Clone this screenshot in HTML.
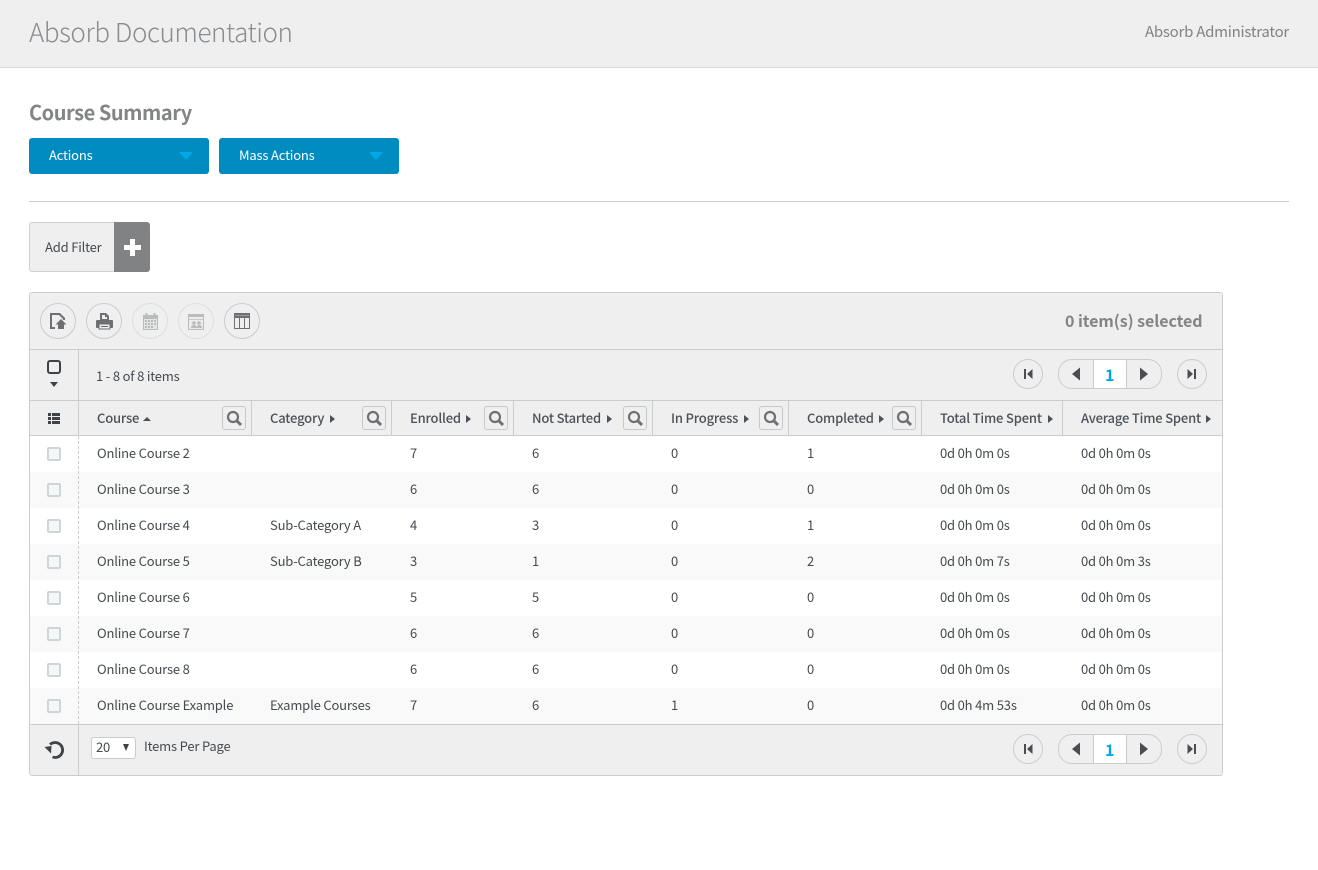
<!DOCTYPE html>
<html><head><meta charset="utf-8"><title>Course Summary</title>
<style>
html,body{margin:0;padding:0;background:#fff;width:1318px;height:870px;overflow:hidden}
body{font-family:"Noto Sans CJK JP","Liberation Sans",sans-serif;font-size:13px;letter-spacing:-.18px;color:#454a50;position:relative}
.a{position:absolute}
.t{position:absolute;white-space:nowrap;line-height:18px;height:18px}
.hl{position:absolute;background:#c9cdcd;height:1px}
.vl{position:absolute;background:#c9cdcd;width:1px}
.btn{position:absolute;top:138px;width:180px;height:36px;background:#008cbf;border-radius:3px;color:#fff;font-size:13px;line-height:33px}
.btn span{position:absolute;left:20px;white-space:nowrap}
.btn i{position:absolute;left:150px;top:14px;width:0;height:0;border-left:7px solid transparent;border-right:7px solid transparent;border-top:8px solid #00a8ea}
.c{position:absolute;width:34px;height:34px;border:1px solid #c9cdcd;border-radius:50%;top:303px}
.c svg{position:absolute;left:0;top:0}
.c.d{border-color:#dcdfdf}
.th{font-weight:500;color:#4c5157}
.s{position:absolute;top:406px;width:22px;height:22px;border:1px solid #c5c9c9;border-radius:3px;background:#efefef}
.s svg{position:absolute;left:2px;top:2px}
.ar{position:absolute;top:415px;width:0;height:0;border-top:4px solid transparent;border-bottom:4px solid transparent;border-left:5px solid #4c5157}
.cb{position:absolute;left:47px;width:10px;height:10px;border:2px solid #cfd6d8;border-radius:2px;background:#f5f6f6}
.p{position:absolute;border:1px solid #c9cdcd;background:#efefef}
.rc{width:28px;height:28px;border-radius:50%}
</style></head><body>
<div class="a" style="left:0;top:0;width:1318px;height:67px;background:#efefef;border-bottom:1px solid #d6d8d8"></div>
<div class="t" style="left:29px;top:14px;height:36px;line-height:36px;font-size:26px;letter-spacing:-.43px;font-weight:300;color:#8a8d90">Absorb Documentation</div>
<div class="t" style="left:1145px;top:23px;font-size:15px;letter-spacing:-.25px;color:#808386">Absorb Administrator</div>
<div class="t" style="left:29px;top:98px;height:28px;line-height:28px;font-size:20px;letter-spacing:-.45px;font-weight:700;color:#828485">Course Summary</div>
<div class="btn" style="left:29px"><span>Actions</span><i></i></div>
<div class="btn" style="left:219px"><span>Mass Actions</span><i></i></div>
<div class="hl" style="left:29px;top:201px;width:1260px"></div>

<div class="a" style="left:29px;top:222px;width:84px;height:48px;background:#efefef;border:1px solid #cfd2d2;border-right:0;border-radius:3px 0 0 3px"></div>
<div class="a" style="left:114px;top:222px;width:36px;height:50px;background:#808284;border-radius:0 3px 3px 0"></div>
<div class="a" style="left:130px;top:239px;width:5px;height:17px;background:#fff"></div>
<div class="a" style="left:124px;top:245px;width:17px;height:5px;background:#fff"></div>
<div class="t" style="left:45px;top:238px;color:#454a50">Add Filter</div>

<!-- panel -->
<div class="a" style="left:29px;top:292px;width:1192px;height:482px;border:1px solid #c9cdcd;border-radius:3px;background:#fff"></div>
<div class="a" style="left:30px;top:293px;width:1192px;height:56px;background:#efefef;border-radius:3px 3px 0 0"></div>
<div class="a" style="left:30px;top:350px;width:1192px;height:50px;background:#efefef"></div>
<div class="a" style="left:30px;top:401px;width:1192px;height:34px;background:#efefef"></div>
<div class="a" style="left:30px;top:725px;width:1192px;height:50px;background:#efefef;border-radius:0 0 3px 3px"></div>
<div class="hl" style="left:30px;top:349px;width:1192px"></div>
<div class="hl" style="left:30px;top:400px;width:1192px"></div>
<div class="hl" style="left:30px;top:435px;width:1192px"></div>
<div class="hl" style="left:30px;top:724px;width:1192px"></div>
<div class="vl" style="left:78px;top:350px;height:86px"></div>
<div class="vl" style="left:78px;top:725px;height:50px"></div>
<div class="vl" style="left:251px;top:401px;height:34px"></div>
<div class="vl" style="left:391px;top:401px;height:34px"></div>
<div class="vl" style="left:513px;top:401px;height:34px"></div>
<div class="vl" style="left:652px;top:401px;height:34px"></div>
<div class="vl" style="left:788px;top:401px;height:34px"></div>
<div class="vl" style="left:921px;top:401px;height:34px"></div>
<div class="vl" style="left:1062px;top:401px;height:34px"></div>

<!-- toolbar circles -->
<div class="c" style="left:40px"><svg width="34" height="34"><path d="M9 9h10l5 5v2h-2v-1l-4-4h-7v12h3v2h-5z" fill="#6e6f72"/><path d="M20 15l5.500 5.500h-2.500v4.500h-6v-4.500h-2.500z" fill="#6e6f72"/></svg></div>
<div class="c" style="left:86px"><svg width="34" height="34"><path d="M13 9h6l3 3v4h-9z" fill="#6e6f72"/><path d="M15 11h3v2h2v2h-5z" fill="#eee"/><path d="M10 16h15a1 1 0 0 1 1 1v6a1 1 0 0 1-1 1h-15a1 1 0 0 1-1-1v-6a1 1 0 0 1 1-1z" fill="#6e6f72"/><rect x="12" y="20" width="11" height="5" fill="#eee" stroke="#6e6f72" stroke-width="1"/><rect x="14" y="22" width="7" height="1" fill="#6e6f72"/></svg></div>
<div class="c d" style="left:132px"><svg width="34" height="34"><rect x="10" y="11" width="15" height="15" fill="#b9bbbc"/><rect x="12.500" y="9" width="2" height="4" fill="#b9bbbc"/><rect x="20.500" y="9" width="2" height="4" fill="#b9bbbc"/><path d="M11 15h13v10h-13z" fill="#e4e5e5"/><path d="M12 16h2v2h-2zM15 16h2v2h-2zM18 16h2v2h-2zM21 16h2v2h-2zM12 19h2v2h-2zM15 19h2v2h-2zM18 19h2v2h-2zM21 19h2v2h-2zM12 22h2v2h-2zM15 22h2v2h-2zM18 22h2v2h-2z" fill="#b9bbbc"/></svg></div>
<div class="c d" style="left:178px"><svg width="34" height="34"><rect x="9.500" y="10.500" width="15" height="15" fill="#ececec" stroke="#b9bbbc"/><rect x="9" y="10" width="16" height="3" fill="#b9bbbc"/><rect x="10" y="15" width="14" height="1" fill="#c9cbcb"/><circle cx="15" cy="19" r="1.800" fill="#b9bbbc"/><circle cx="20" cy="19" r="1.800" fill="#b9bbbc"/><path d="M12 24c0-2 1-3 3-3s3 1 3 3zM18 24c0-2 1-3 2-3 2 0 3 1 3 3z" fill="#b9bbbc"/></svg></div>
<div class="c" style="left:224px"><svg width="34" height="34"><rect x="9" y="9" width="16" height="16" fill="#6e6f72"/><rect x="10" y="14" width="4" height="10" fill="#eee"/><rect x="15" y="14" width="4" height="10" fill="#eee"/><rect x="20" y="14" width="4" height="10" fill="#eee"/><rect x="10" y="11" width="14" height="1" fill="#9a9b9d"/></svg></div>
<div class="t" style="left:1065px;top:310px;height:20px;line-height:20px;font-size:16px;letter-spacing:-.06px;font-weight:700;color:#828485">0 item(s) selected</div>

<!-- select col -->
<div class="a" style="left:47px;top:360px;width:10px;height:10px;border:2px solid #3f4348;border-radius:3px"></div>
<div class="a" style="left:50px;top:382px;width:0;height:0;border-left:4px solid transparent;border-right:4px solid transparent;border-top:5px solid #3f4348"></div>
<div class="t" style="left:96px;top:367px">1 - 8 of 8 items</div>
<svg class="a" style="left:48px;top:412px" width="13" height="13"><path d="M0 1h3v3h-3zM0 5h3v3h-3zM0 9h3v3h-3zM4 1h8v3h-8zM4 5h8v3h-8zM4 9h8v3h-8z" fill="#3f4348"/></svg>

<!-- pagers top -->
<div class="p rc" style="left:1013px;top:359px"></div>
<svg class="a" style="left:1013px;top:359px" width="30" height="30"><path d="M11 10h2v10h-2zM19.500 10v10l-5.500-5z" fill="#4a4c50"/></svg>
<div class="p" style="left:1058px;top:359px;width:102px;height:28px;border-radius:14px"></div>
<div class="a" style="left:1093px;top:360px;width:32px;height:28px;background:#fff;border-left:1px solid #c9cdcd;border-right:1px solid #c9cdcd"></div>
<svg class="a" style="left:1058px;top:359px" width="104" height="30"><path d="M22 8.500v13l-8-6.500zM82 8.500v13l8-6.500z" fill="#4a4c50"/></svg>
<div class="t" style="left:1105px;top:365px;font-size:16px;font-weight:700;color:#00a8ea">1</div>
<div class="p rc" style="left:1177px;top:359px"></div>
<svg class="a" style="left:1177px;top:359px" width="30" height="30"><path d="M10.500 10v10l5.500-5zM17 10h2v10h-2z" fill="#4a4c50"/></svg>

<!-- headers -->
<div class="t th" style="left:97px;top:409px">Course</div>
<div class="a" style="left:143px;top:417px;width:0;height:0;border-left:4px solid transparent;border-right:4px solid transparent;border-bottom:4px solid #4c5157"></div>
<div class="t th" style="left:270px;top:409px">Category</div><div class="ar" style="left:330px"></div>
<div class="t th" style="left:410px;top:409px">Enrolled</div><div class="ar" style="left:466px"></div>
<div class="t th" style="left:532px;top:409px">Not Started</div><div class="ar" style="left:607px"></div>
<div class="t th" style="left:671px;top:409px">In Progress</div><div class="ar" style="left:744px"></div>
<div class="t th" style="left:807px;top:409px">Completed</div><div class="ar" style="left:879px"></div>
<div class="t th" style="left:940px;top:409px">Total Time Spent</div><div class="ar" style="left:1048px"></div>
<div class="t th" style="left:1081px;top:409px">Average Time Spent</div><div class="ar" style="left:1206px"></div>
<div class="s" style="left:222px"><svg width="18" height="18"><circle cx="8" cy="8" r="5" fill="none" stroke="#6e7073" stroke-width="2.200"/><path d="M11.500 11.500l4.500 4.500" stroke="#6e7073" stroke-width="3"/></svg></div>
<div class="s" style="left:362px"><svg width="18" height="18"><circle cx="8" cy="8" r="5" fill="none" stroke="#6e7073" stroke-width="2.200"/><path d="M11.500 11.500l4.500 4.500" stroke="#6e7073" stroke-width="3"/></svg></div>
<div class="s" style="left:484px"><svg width="18" height="18"><circle cx="8" cy="8" r="5" fill="none" stroke="#6e7073" stroke-width="2.200"/><path d="M11.500 11.500l4.500 4.500" stroke="#6e7073" stroke-width="3"/></svg></div>
<div class="s" style="left:623px"><svg width="18" height="18"><circle cx="8" cy="8" r="5" fill="none" stroke="#6e7073" stroke-width="2.200"/><path d="M11.500 11.500l4.500 4.500" stroke="#6e7073" stroke-width="3"/></svg></div>
<div class="s" style="left:759px"><svg width="18" height="18"><circle cx="8" cy="8" r="5" fill="none" stroke="#6e7073" stroke-width="2.200"/><path d="M11.500 11.500l4.500 4.500" stroke="#6e7073" stroke-width="3"/></svg></div>
<div class="s" style="left:892px"><svg width="18" height="18"><circle cx="8" cy="8" r="5" fill="none" stroke="#6e7073" stroke-width="2.200"/><path d="M11.500 11.500l4.500 4.500" stroke="#6e7073" stroke-width="3"/></svg></div>

<!-- row stripes -->
<div class="a" style="left:30px;top:472px;width:1192px;height:36px;background:#f9f9f9"></div>
<div class="a" style="left:30px;top:544px;width:1192px;height:36px;background:#f9f9f9"></div>
<div class="a" style="left:30px;top:616px;width:1192px;height:36px;background:#f9f9f9"></div>
<div class="a" style="left:30px;top:688px;width:1192px;height:36px;background:#f9f9f9"></div>
<div class="a" style="left:78px;top:436px;height:288px;border-left:1px dashed #c9cdcd"></div>

<!-- rows -->
<div class="cb" style="top:447px"></div>
<div class="t" style="left:97px;top:444px">Online Course 2</div><div class="t" style="left:410px;top:444px">7</div><div class="t" style="left:532px;top:444px">6</div><div class="t" style="left:671px;top:444px">0</div><div class="t" style="left:807px;top:444px">1</div><div class="t" style="left:940px;top:444px">0d 0h 0m 0s</div><div class="t" style="left:1081px;top:444px">0d 0h 0m 0s</div>
<div class="cb" style="top:483px"></div>
<div class="t" style="left:97px;top:480px">Online Course 3</div><div class="t" style="left:410px;top:480px">6</div><div class="t" style="left:532px;top:480px">6</div><div class="t" style="left:671px;top:480px">0</div><div class="t" style="left:807px;top:480px">0</div><div class="t" style="left:940px;top:480px">0d 0h 0m 0s</div><div class="t" style="left:1081px;top:480px">0d 0h 0m 0s</div>
<div class="cb" style="top:519px"></div>
<div class="t" style="left:97px;top:516px">Online Course 4</div><div class="t" style="left:270px;top:516px">Sub-Category A</div><div class="t" style="left:410px;top:516px">4</div><div class="t" style="left:532px;top:516px">3</div><div class="t" style="left:671px;top:516px">0</div><div class="t" style="left:807px;top:516px">1</div><div class="t" style="left:940px;top:516px">0d 0h 0m 0s</div><div class="t" style="left:1081px;top:516px">0d 0h 0m 0s</div>
<div class="cb" style="top:555px"></div>
<div class="t" style="left:97px;top:552px">Online Course 5</div><div class="t" style="left:270px;top:552px">Sub-Category B</div><div class="t" style="left:410px;top:552px">3</div><div class="t" style="left:532px;top:552px">1</div><div class="t" style="left:671px;top:552px">0</div><div class="t" style="left:807px;top:552px">2</div><div class="t" style="left:940px;top:552px">0d 0h 0m 7s</div><div class="t" style="left:1081px;top:552px">0d 0h 0m 3s</div>
<div class="cb" style="top:591px"></div>
<div class="t" style="left:97px;top:588px">Online Course 6</div><div class="t" style="left:410px;top:588px">5</div><div class="t" style="left:532px;top:588px">5</div><div class="t" style="left:671px;top:588px">0</div><div class="t" style="left:807px;top:588px">0</div><div class="t" style="left:940px;top:588px">0d 0h 0m 0s</div><div class="t" style="left:1081px;top:588px">0d 0h 0m 0s</div>
<div class="cb" style="top:627px"></div>
<div class="t" style="left:97px;top:624px">Online Course 7</div><div class="t" style="left:410px;top:624px">6</div><div class="t" style="left:532px;top:624px">6</div><div class="t" style="left:671px;top:624px">0</div><div class="t" style="left:807px;top:624px">0</div><div class="t" style="left:940px;top:624px">0d 0h 0m 0s</div><div class="t" style="left:1081px;top:624px">0d 0h 0m 0s</div>
<div class="cb" style="top:663px"></div>
<div class="t" style="left:97px;top:660px">Online Course 8</div><div class="t" style="left:410px;top:660px">6</div><div class="t" style="left:532px;top:660px">6</div><div class="t" style="left:671px;top:660px">0</div><div class="t" style="left:807px;top:660px">0</div><div class="t" style="left:940px;top:660px">0d 0h 0m 0s</div><div class="t" style="left:1081px;top:660px">0d 0h 0m 0s</div>
<div class="cb" style="top:699px"></div>
<div class="t" style="left:97px;top:696px">Online Course Example</div><div class="t" style="left:270px;top:696px">Example Courses</div><div class="t" style="left:410px;top:696px">7</div><div class="t" style="left:532px;top:696px">6</div><div class="t" style="left:671px;top:696px">1</div><div class="t" style="left:807px;top:696px">0</div><div class="t" style="left:940px;top:696px">0d 0h 4m 53s</div><div class="t" style="left:1081px;top:696px">0d 0h 0m 0s</div>

<!-- footer -->
<svg class="a" style="left:43px;top:739px" width="23" height="22"><path d="M7 5.500A7.500 7.500 0 1 1 9.500 18" fill="none" stroke="#3f4348" stroke-width="2.800"/><path d="M1.500 8L8.500 7L8 14.500z" fill="#3f4348"/></svg>
<div class="a" style="left:91px;top:737px;width:43px;height:20px;background:#fff;border:1px solid #c9cdcd;border-radius:3px"></div>
<div class="t" style="left:96px;top:738px">20</div>
<div class="a" style="left:123px;top:744px;width:0;height:0;border-left:3.500px solid transparent;border-right:3.500px solid transparent;border-top:7px solid #3f4348"></div>
<div class="t" style="left:144px;top:737px">Items Per Page</div>
<div class="p rc" style="left:1013px;top:734px"></div>
<svg class="a" style="left:1013px;top:734px" width="30" height="30"><path d="M11 10h2v10h-2zM19.500 10v10l-5.500-5z" fill="#4a4c50"/></svg>
<div class="p" style="left:1058px;top:734px;width:102px;height:28px;border-radius:14px"></div>
<div class="a" style="left:1093px;top:735px;width:32px;height:28px;background:#fff;border-left:1px solid #c9cdcd;border-right:1px solid #c9cdcd"></div>
<svg class="a" style="left:1058px;top:734px" width="104" height="30"><path d="M22 8.500v13l-8-6.500zM82 8.500v13l8-6.500z" fill="#4a4c50"/></svg>
<div class="t" style="left:1105px;top:740px;font-size:16px;font-weight:700;color:#00a8ea">1</div>
<div class="p rc" style="left:1177px;top:734px"></div>
<svg class="a" style="left:1177px;top:734px" width="30" height="30"><path d="M10.500 10v10l5.500-5zM17 10h2v10h-2z" fill="#4a4c50"/></svg>
</body></html>
